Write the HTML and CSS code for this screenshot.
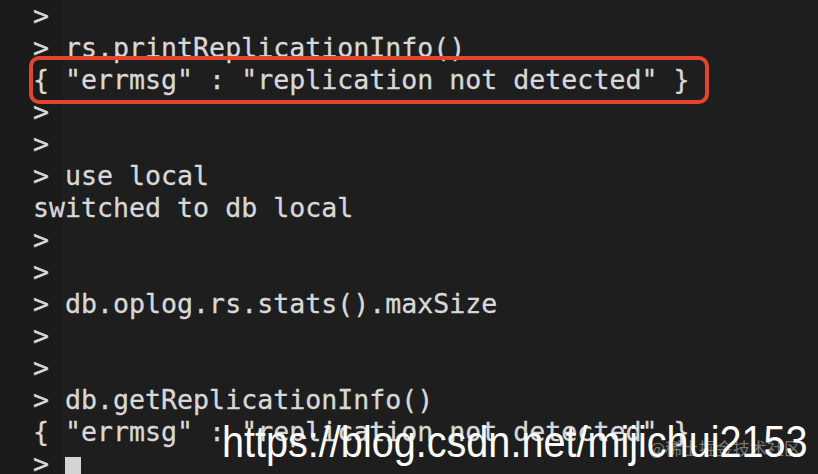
FILE: index.html
```html
<!DOCTYPE html>
<html>
<head>
<meta charset="utf-8">
<link rel="stylesheet" href="styles.css">
</head>
<body>
<div class="term">
  <div class="gutter"></div>
  <pre class="screen"><span class="ln">&gt;</span>
<span class="ln">&gt; rs.printReplicationInfo()</span>
<span class="ln hl">{ "errmsg" : "replication not detected" }</span>
<span class="ln">&gt;</span>
<span class="ln">&gt;</span>
<span class="ln">&gt; use local</span>
<span class="ln">switched to db local</span>
<span class="ln">&gt;</span>
<span class="ln">&gt;</span>
<span class="ln">&gt; db.oplog.rs.stats().maxSize</span>
<span class="ln">&gt;</span>
<span class="ln">&gt;</span>
<span class="ln">&gt; db.getReplicationInfo()</span>
<span class="ln">{ "errmsg" : "replication not detected" }</span>
<span class="ln">&gt; <span class="cursor"> </span></span></pre>
  <div class="wm-cn">@稀土掘金技术社区</div>
  <div class="wm-url">https://blog.csdn.net/mijichui2153</div>
</div>
</body>
</html>
```
FILE: styles.css
```css
html, body {
  margin: 0;
  padding: 0;
  background: #1e1e1e;
}
.term {
  position: relative;
  width: 818px;
  height: 474px;
  overflow: hidden;
  background: #1e1e1e;
  display: flex;
}
.gutter {
  position: absolute;
  left: 0;
  top: 0;
  width: 62px;
  height: 100%;
  background: #1b1b1b;
}
.screen {
  position: relative;
  margin: 0;
  padding: 0 0 0 33px;
  font-family: "DejaVu Sans Mono", monospace;
  font-size: 26.6px;
  line-height: 32px;
  color: #d8d8d8;
  -webkit-text-stroke: 0.3px #d8d8d8;
  white-space: pre;
}
.ln {
  position: relative;
}
.hl::after {
  content: "";
  position: absolute;
  left: -4px;
  top: -8px;
  width: 680px;
  height: 48px;
  box-sizing: border-box;
  border: 4px solid #e2452f;
  border-radius: 10px;
}
.cursor {
  display: inline-block;
  width: 16px;
  height: 30px;
  background: #d4d4d4;
  vertical-align: -9px;
}
.wm-cn {
  position: absolute;
  left: 649px;
  top: 436px;
  font-family: "Noto Sans CJK SC", sans-serif;
  font-size: 17px;
  line-height: 24px;
  color: rgba(200, 200, 200, 0.55);
}
.wm-url {
  position: absolute;
  left: 222px;
  top: 420px;
  font-family: "Liberation Sans", Arial, sans-serif;
  font-size: 44px;
  line-height: 44px;
  color: #ffffff;
  transform: scaleX(0.9);
  transform-origin: left top;
  white-space: nowrap;
}
```
